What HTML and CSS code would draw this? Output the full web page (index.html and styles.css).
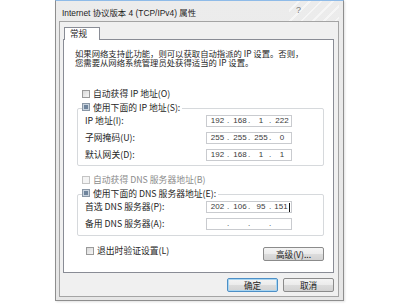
FILE: index.html
```html
<!DOCTYPE html>
<html lang="zh-CN">
<head>
<meta charset="utf-8">
<link rel="stylesheet" href="styles.css">
</head>
<body>
<div class="window">
  <div class="titlebar">
    <span class="title">Internet 协议版本 4 (TCP/IPv4) 属性</span>
    <span class="help">?</span>
  </div>
  <div class="client">
    <div class="tabs"><div class="tab">常规</div></div>
    <div class="page">
      <p class="intro"><span class="line">如果网络支持此功能，则可以获取自动指派的 IP 设置。否则，</span><span class="line">您需要从网络系统管理员处获得适当的 IP 设置。</span></p>
      <div class="opt"><span class="cb"></span>自动获得 IP 地址(O)</div>
      <div class="group">
        <div class="legend"><span class="cb checked"></span>使用下面的 IP 地址(S):</div>
        <div class="rows">
          <span class="lbl">IP 地址(I):</span>
          <div class="ip"><span class="seg"><span class="num">192</span></span><span class="seg"><span class="dot">.</span><span class="num">168</span></span><span class="seg"><span class="dot">.</span><span class="num">1</span></span><span class="seg"><span class="dot">.</span><span class="num">222</span></span></div>
          <span class="lbl">子网掩码(U):</span>
          <div class="ip"><span class="seg"><span class="num">255</span></span><span class="seg"><span class="dot">.</span><span class="num">255</span></span><span class="seg"><span class="dot">.</span><span class="num">255</span></span><span class="seg"><span class="dot">.</span><span class="num">0</span></span></div>
          <span class="lbl">默认网关(D):</span>
          <div class="ip"><span class="seg"><span class="num">192</span></span><span class="seg"><span class="dot">.</span><span class="num">168</span></span><span class="seg"><span class="dot">.</span><span class="num">1</span></span><span class="seg"><span class="dot">.</span><span class="num">1</span></span></div>
        </div>
      </div>
      <div class="opt disabled"><span class="cb"></span>自动获得 DNS 服务器地址(B)</div>
      <div class="group dns">
        <div class="legend"><span class="cb checked"></span>使用下面的 DNS 服务器地址(E):</div>
        <div class="rows">
          <span class="lbl">首选 DNS 服务器(P):</span>
          <div class="ip"><span class="seg"><span class="num">202</span></span><span class="seg"><span class="dot">.</span><span class="num">106</span></span><span class="seg"><span class="dot">.</span><span class="num">95</span></span><span class="seg"><span class="dot">.</span><span class="num">151<span class="caret"></span></span></span></div>
          <span class="lbl">备用 DNS 服务器(A):</span>
          <div class="ip"><span class="seg"><span class="num"></span></span><span class="seg"><span class="dot">.</span><span class="num"></span></span><span class="seg"><span class="dot">.</span><span class="num"></span></span><span class="seg"><span class="dot">.</span><span class="num"></span></span></div>
        </div>
      </div>
      <div class="bottomrow">
        <div class="opt exit"><span class="cb"></span>退出时验证设置(L)</div>
        <button class="btn adv">高级(V)...</button>
      </div>
    </div>
    <div class="buttons">
      <button class="btn default">确定</button>
      <button class="btn">取消</button>
    </div>
  </div>
</div>
</body>
</html>
```
FILE: styles.css
```css
* { box-sizing: border-box; }
html, body { margin: 0; padding: 0; }
body {
  width: 400px;
  height: 305px;
  overflow: hidden;
  background: #ffffff;
  font-family: "Noto Sans CJK SC", "Liberation Sans", sans-serif;
  color: #262626;
}
.window {
  box-sizing: content-box;
  margin-left: 55px;
  width: 280px;
  height: 296px;
  padding: 0 4px 3px 3px;
  border: 1px solid #8e8e8e;
  border-top-color: #8fbbe8;
  background: linear-gradient(#ececec, #e6e6e6);
  display: flex;
  flex-direction: column;
  box-shadow: 1px 1px 2px rgba(0,0,0,0.12);
}
.titlebar {
  height: 20px;
  padding: 3px 0 0 3px;
  display: flex;
  align-items: center;
  justify-content: space-between;
  background: repeating-linear-gradient(135deg, rgba(255,255,255,0) 0 6px, rgba(255,255,255,0.5) 6px 8px) right top / 50px 20px no-repeat;
}
.title {
  font-family: "Liberation Sans", "Noto Sans CJK SC", sans-serif;
  font-size: 8.4px;
  line-height: 12px;
  color: #1e1e1e;
}
.help {
  font-family: "Liberation Sans", sans-serif;
  font-size: 9px;
  line-height: 10px;
  color: #7a7a7a;
  margin: -6px 38px 0 0;
}
.client {
  height: 276px;
  border: 1px solid #a4a4a4;
  background: #f0f0f0;
  padding: 5px 4px 4px 3px;
  display: flex;
  flex-direction: column;
}
.tabs { display: flex; height: 12px; }
.tab {
  position: relative;
  z-index: 1;
  margin-left: 1px;
  width: 36px;
  height: 13px;
  border: 1px solid #898c95;
  border-bottom: none;
  background: #ffffff;
  font-size: 8.6px;
  line-height: 11px;
  padding-left: 5px;
}
.page {
  height: 234px;
  border: 1px solid #898c95;
  background: #ffffff;
  padding-top: 9px;
  display: flex;
  flex-direction: column;
}
.intro {
  margin: 0;
  padding-left: 11px;
  font-size: 8.35px;
  line-height: 9px;
  white-space: nowrap;
  display: flex;
  flex-direction: column;
}
.line { display: block; height: 9px; }
.opt {
  display: flex;
  align-items: center;
  height: 12px;
  margin-top: 21px;
  padding-left: 18px;
  font-size: 8.8px;
  line-height: 12px;
  white-space: nowrap;
}
.opt.disabled { margin-top: 8px; color: #8c8c8c; }
.opt.disabled .cb { border-color: #c4c4c4; background: #f4f4f4; }
.cb {
  width: 8px;
  height: 8px;
  margin-right: 3px;
  border: 1px solid #9a9a9a;
  background: linear-gradient(135deg, #d9d9d9, #f6f6f6);
  flex: none;
}
.cb.checked {
  border-color: #8a97a6;
  background: #6f849c;
  box-shadow: inset 0 0 0 1px #c8d3de;
}
.group {
  margin: 8px 9px 0 13px;
  border: 1px solid #d6d9dc;
  border-radius: 2px;
  padding: 0 0 4px 7px;
}
.group.dns { margin-top: 8px; padding-bottom: 5px; }
.legend {
  display: flex;
  align-items: center;
  width: max-content;
  height: 12px;
  margin: -8px 0 0 -3px;
  padding-right: 2px;
  background: #ffffff;
  font-size: 8.8px;
  white-space: nowrap;
}
.rows {
  margin-top: 2px;
  display: grid;
  grid-template-columns: 121px 86px;
  row-gap: 5px;
  align-items: center;
}
.lbl {
  font-size: 8.8px;
  line-height: 12px;
  white-space: nowrap;
}
.ip {
  height: 12px;
  border: 1px solid #c9cbcf;
  background: #ffffff;
  display: grid;
  grid-template-columns: repeat(4, 1fr);
  font-family: "Liberation Sans", sans-serif;
  font-size: 8px;
  line-height: 10px;
  color: #3a3a3a;
}
.seg { display: flex; }
.dot { width: 4px; margin-left: -1px; }
.num { flex: 1; text-align: center; display: flex; justify-content: center; align-items: center; }
.caret {
  display: inline-block;
  width: 1px;
  height: 9px;
  margin-left: 1px;
  background: #111;
}
.bottomrow {
  margin: 9px 9px 0 0;
  display: flex;
  justify-content: space-between;
  align-items: flex-start;
}
.opt.exit { margin-top: 0; padding-left: 22px; }
.btn {
  margin: 0;
  padding: 0;
  width: 51px;
  height: 14px;
  border: 1px solid #8b8b8b;
  border-radius: 2px;
  background: linear-gradient(#f4f4f4 0%, #ebebeb 50%, #dcdcdc 51%, #d2d2d2 100%);
  font-family: "Noto Sans CJK SC", "Liberation Sans", sans-serif;
  font-size: 8.6px;
  line-height: 12px;
  color: #222;
}
.btn.adv { width: 61px; margin-top: 2px; }
.btn.default {
  border-color: #4d8fc6;
  box-shadow: inset 0 0 0 1px #a9d6f2;
}
.buttons {
  margin-top: 5px;
  display: flex;
  justify-content: flex-end;
  gap: 5px;
}
```
